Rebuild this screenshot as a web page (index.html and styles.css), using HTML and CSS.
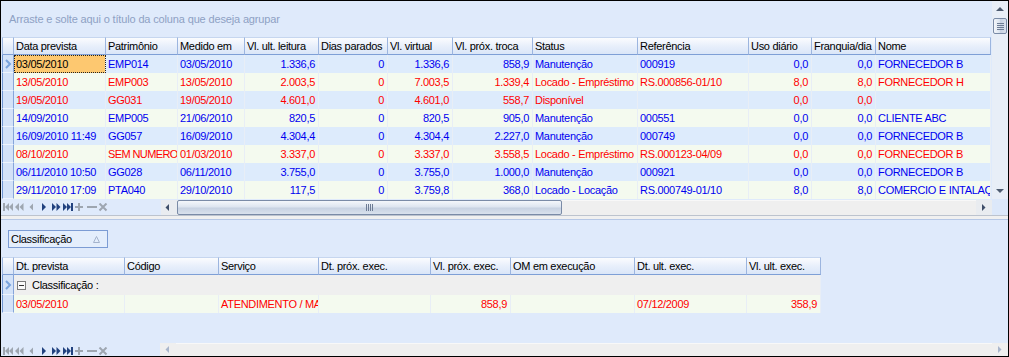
FILE: index.html
```html
<!DOCTYPE html>
<html lang="pt-BR">
<head>
  <meta charset="UTF-8">
  <title>Plano de manutenção</title>
  <link rel="stylesheet" href="styles.css">
</head>
<body>
<div class="window">

  <!-- grade principal -->
  <div class="top">
    <div class="top-main">
      <div class="group-panel">Arraste e solte aqui o título da coluna que deseja agrupar</div>
      <div class="grid-wrap">
        <table class="grid grid-top">
          <colgroup>
            <col class="c-ind"><col class="c-92"><col class="c-72"><col class="c-67"><col class="c-74"><col class="c-69"><col class="c-65"><col class="c-80"><col class="c-105"><col class="c-111"><col class="c-63"><col class="c-64"><col class="c-115">
          </colgroup>
          <thead>
            <tr>
              <th class="ind"></th>
              <th>Data prevista</th><th>Patrimônio</th><th>Medido em</th><th>Vl. ult. leitura</th><th>Dias parados</th><th>Vl. virtual</th><th>Vl. próx. troca</th><th>Status</th><th>Referência</th><th>Uso diário</th><th>Franquia/dia</th><th>Nome</th>
            </tr>
          </thead>
          <tbody>
            <tr class="odd blue">
              <td class="ind"><svg class="chev" width="8" height="10" viewBox="0 0 8 10"><polyline points="2,1 6,5 2,9" fill="none" stroke="#79a3dc" stroke-width="2"/></svg></td>
              <td class="focus">03/05/2010</td><td>EMP014</td><td>03/05/2010</td><td class="num">1.336,6</td><td class="num">0</td><td class="num">1.336,6</td><td class="num">858,9</td><td>Manutenção</td><td>000919</td><td class="num">0,0</td><td class="num">0,0</td><td>FORNECEDOR B</td>
            </tr>
            <tr class="even red">
              <td class="ind"></td>
              <td>13/05/2010</td><td>EMP003</td><td>13/05/2010</td><td class="num">2.003,5</td><td class="num">0</td><td class="num">7.003,5</td><td class="num">1.339,4</td><td>Locado - Empréstimo</td><td>RS.000856-01/10</td><td class="num">8,0</td><td class="num">8,0</td><td>FORNECEDOR H</td>
            </tr>
            <tr class="odd red">
              <td class="ind"></td>
              <td>19/05/2010</td><td>GG031</td><td>19/05/2010</td><td class="num">4.601,0</td><td class="num">0</td><td class="num">4.601,0</td><td class="num">558,7</td><td>Disponível</td><td></td><td class="num">0,0</td><td class="num">0,0</td><td></td>
            </tr>
            <tr class="even blue">
              <td class="ind"></td>
              <td>14/09/2010</td><td>EMP005</td><td>21/06/2010</td><td class="num">820,5</td><td class="num">0</td><td class="num">820,5</td><td class="num">905,0</td><td>Manutenção</td><td>000551</td><td class="num">0,0</td><td class="num">0,0</td><td>CLIENTE ABC</td>
            </tr>
            <tr class="odd blue">
              <td class="ind"></td>
              <td>16/09/2010 11:49</td><td>GG057</td><td>16/09/2010</td><td class="num">4.304,4</td><td class="num">0</td><td class="num">4.304,4</td><td class="num">2.227,0</td><td>Manutenção</td><td>000749</td><td class="num">0,0</td><td class="num">0,0</td><td>FORNECEDOR B</td>
            </tr>
            <tr class="even red">
              <td class="ind"></td>
              <td>08/10/2010</td><td class="tight">SEM NUMERO</td><td>01/03/2010</td><td class="num">3.337,0</td><td class="num">0</td><td class="num">3.337,0</td><td class="num">3.558,5</td><td>Locado - Empréstimo</td><td>RS.000123-04/09</td><td class="num">0,0</td><td class="num">0,0</td><td>FORNECEDOR B</td>
            </tr>
            <tr class="odd blue">
              <td class="ind"></td>
              <td>06/11/2010 10:50</td><td>GG028</td><td>06/11/2010</td><td class="num">3.755,0</td><td class="num">0</td><td class="num">3.755,0</td><td class="num">1.000,0</td><td>Manutenção</td><td>000921</td><td class="num">0,0</td><td class="num">0,0</td><td>FORNECEDOR B</td>
            </tr>
            <tr class="even blue">
              <td class="ind"></td>
              <td>29/11/2010 17:09</td><td>PTA040</td><td>29/10/2010</td><td class="num">117,5</td><td class="num">0</td><td class="num">3.759,8</td><td class="num">368,0</td><td>Locado - Locação</td><td>RS.000749-01/10</td><td class="num">8,0</td><td class="num">8,0</td><td>COMERCIO E INTALAÇÕES</td>
            </tr>
          </tbody>
        </table>
      </div>
      <div class="nav-bar">
        <svg class="nav" width="110" height="9" viewBox="1 0 110 9">
          <g fill="#9ea6b0">
            <rect x="3" y="0" width="2" height="8"/>
            <polygon points="9,0 9,8 5,4"/><polygon points="13,0 13,8 9,4"/>
            <polygon points="19,0 19,8 15,4"/><polygon points="23.5,0 23.5,8 19.5,4"/>
            <polygon points="33,0.5 33,7.5 29.5,4"/>
          </g>
          <g fill="#22427f">
            <polygon points="42,0 42,8 46,4"/>
            <polygon points="52,0 52,8 56,4"/><polygon points="56.5,0 56.5,8 60.5,4"/>
            <polygon points="63,0 63,8 67,4"/><polygon points="67,0 67,8 71,4"/>
            <rect x="71" y="0" width="2" height="8"/>
          </g>
          <g fill="#9ea6b0">
            <rect x="75" y="3" width="8" height="2"/><rect x="78" y="0" width="2" height="8"/>
            <rect x="87" y="3" width="10" height="2"/>
          </g>
          <path d="M99.5 0.5 L106.5 7.5 M106.5 0.5 L99.5 7.5" stroke="#9ea6b0" stroke-width="2"/>
        </svg>
        <div class="hscroll">
          <div class="sb-btn"><svg width="16" height="15" viewBox="0 0 16 15"><polygon points="8,4 8,11 4.5,7.5" fill="#3e4e69"/></svg></div>
          <div class="sb-thumb-h"><svg width="8" height="7" viewBox="0 0 8 7"><path d="M0.5 0 V7 M2.5 0 V7 M4.5 0 V7 M6.5 0 V7" stroke="#6d7c95" stroke-width="1"/></svg></div>
          <div class="sb-track"></div>
          <div class="sb-btn"><svg width="16" height="15" viewBox="0 0 16 15"><polygon points="6,4 6,11 9.5,7.5" fill="#3e4e69"/></svg></div>
        </div>
      </div>
    </div>

    <div class="side">
      <div class="vscroll">
        <div class="sb-btn-v"><svg width="16" height="16" viewBox="0 0 16 16"><polygon points="4,10 12,10 8,6" fill="#4d5b70"/></svg></div>
        <div class="sb-thumb-v"><svg width="7" height="7" viewBox="0 0 7 7"><path d="M0 0.5 H7 M0 2.5 H7 M0 4.5 H7 M0 6.5 H7" stroke="#6d7c95" stroke-width="1"/></svg></div>
        <div class="sb-track"></div>
        <div class="sb-btn-v"><svg width="16" height="16" viewBox="0 0 16 16"><polygon points="4,6 12,6 8,10" fill="#4d5b70"/></svg></div>
      </div>
      <div class="corner"></div>
    </div>
  </div>

  <div class="splitter"></div>

  <!-- grade de serviços -->
  <div class="bottom">
    <div class="group-box">
      <span>Classificação</span>
      <svg width="7" height="7" viewBox="0 0 7 7"><polygon points="0.5,6.5 6.5,6.5 3.5,0.5" fill="none" stroke="#a4b3cc" stroke-width="1"/></svg>
    </div>
    <table class="grid grid-bottom">
      <colgroup>
        <col class="c-ind"><col class="c-111"><col class="c-94"><col class="c-100"><col class="c-112"><col class="c-80"><col class="c-124"><col class="c-112"><col class="c-74">
      </colgroup>
      <thead>
        <tr>
          <th class="ind"></th>
          <th>Dt. prevista</th><th>Código</th><th>Serviço</th><th>Dt. próx. exec.</th><th>Vl. próx. exec.</th><th>OM em execução</th><th>Dt. ult. exec.</th><th>Vl. ult. exec.</th>
        </tr>
      </thead>
      <tbody>
        <tr class="group-row">
          <td class="ind"><svg class="chev" width="8" height="10" viewBox="0 0 8 10"><polyline points="2,1 6,5 2,9" fill="none" stroke="#79a3dc" stroke-width="2"/></svg></td>
          <td colspan="8"><span class="collapse"></span>Classificação :</td>
        </tr>
        <tr class="even red">
          <td class="ind"></td>
          <td>03/05/2010</td><td></td><td>ATENDIMENTO / MANUTENÇÃO</td><td></td><td class="num">858,9</td><td></td><td>07/12/2009</td><td class="num">358,9</td>
        </tr>
      </tbody>
    </table>
  </div>

  <div class="bottom-bar">
    <svg class="nav" width="110" height="9" viewBox="1 0 110 9">
      <g fill="#9ea6b0">
        <rect x="3" y="0" width="2" height="8"/>
        <polygon points="9,0 9,8 5,4"/><polygon points="13,0 13,8 9,4"/>
        <polygon points="19,0 19,8 15,4"/><polygon points="23.5,0 23.5,8 19.5,4"/>
        <polygon points="33,0.5 33,7.5 29.5,4"/>
      </g>
      <g fill="#22427f">
        <polygon points="42,0 42,8 46,4"/>
        <polygon points="52,0 52,8 56,4"/><polygon points="56.5,0 56.5,8 60.5,4"/>
        <polygon points="63,0 63,8 67,4"/><polygon points="67,0 67,8 71,4"/>
        <rect x="71" y="0" width="2" height="8"/>
      </g>
      <g fill="#9ea6b0">
        <rect x="75" y="3" width="8" height="2"/><rect x="78" y="0" width="2" height="8"/>
        <rect x="87" y="3" width="10" height="2"/>
      </g>
      <path d="M99.5 0.5 L106.5 7.5 M106.5 0.5 L99.5 7.5" stroke="#9ea6b0" stroke-width="2"/>
    </svg>
    <div class="hscroll hscroll-off">
      <div class="sb-btn"><svg width="16" height="13" viewBox="0 0 16 13"><polygon points="9,3 9,10 5.5,6.5" fill="#a9b6cc"/></svg></div>
      <div class="sb-track"></div>
      <div class="sb-btn"><svg width="16" height="13" viewBox="0 0 16 13"><polygon points="6,3 6,10 9.5,6.5" fill="#a9b6cc"/></svg></div>
    </div>
  </div>

</div>
</body>
</html>
```

FILE: styles.css
```css
* { box-sizing: border-box; }
body { margin: 0; font-family: "Liberation Sans", Arial, sans-serif; font-size: 11px; letter-spacing: -0.3px; color: #000; }

.window { width: 1009px; height: 357px; border: 1px solid #000; background: #dfeafb; display: flex; flex-direction: column; overflow: hidden; }

/* parte de cima */
.top { display: flex; height: 214px; }
.top-main { width: 991px; display: flex; flex-direction: column; }
.group-panel { height: 36px; padding: 12px 0 0 8px; color: #8ea1c4; white-space: nowrap; letter-spacing: -0.15px; }
.grid-wrap { height: 162px; padding-left: 1px; overflow: hidden; }

.grid { border-spacing: 0; table-layout: fixed; }
.grid-top { width: 989px; }
.grid-bottom { width: 819px; margin-left: 1px; }
.grid th, .grid td { white-space: nowrap; overflow: hidden; padding: 0 3px 0 2px; line-height: 13px; }
.grid th { height: 18px; text-align: left; font-weight: normal; background: linear-gradient(#fbfcfe, #e8effb 50%, #dae6f8); border-top: 1px solid #c6d6ef; border-bottom: 1px solid #7e9fd6; border-right: 1px solid #9cb5df; }
.grid td { height: 18px; border-right: 1px solid #e8eef6; }
.grid td.num { text-align: right; }
.grid td.tight { padding-right: 0; letter-spacing: -0.6px; }
.grid th.ind { border-left: 1px solid #9cb5df; }
.grid td.ind { padding: 0; background: #d3e2f8; border-left: 1px solid #7096d2; border-right: 1px solid #86a5da; border-bottom: 1px solid #eef4fd; }
.chev { display: block; margin-left: 1px; }

.odd td { background: #ddebfc; }
.even td { background: #f4faef; }
.blue td { color: #0000f0; }
.red td { color: #ff0000; }
.grid td.focus { background: #fdc870; color: #000; outline: 1px dotted #222; outline-offset: -1px; }

/* c-<largura> */
.c-ind { width: 12px; }
.c-63 { width: 63px; }
.c-64 { width: 64px; }
.c-65 { width: 65px; }
.c-67 { width: 67px; }
.c-69 { width: 69px; }
.c-72 { width: 72px; }
.c-74 { width: 74px; }
.c-80 { width: 80px; }
.c-92 { width: 92px; }
.c-94 { width: 94px; }
.c-100 { width: 100px; }
.c-105 { width: 105px; }
.c-111 { width: 111px; }
.c-112 { width: 112px; }
.c-115 { width: 115px; }
.c-124 { width: 124px; }

/* navegador + barras */
.nav-bar { height: 16px; display: flex; padding-top: 1px; }
.nav { display: block; margin-top: 3px; flex: none; }
.hscroll { display: flex; margin-left: 50px; flex: 1; height: 15px; background: #efefef; }
.sb-btn { width: 16px; flex: none; background: #e9ecf0; }
.sb-btn svg { display: block; }
.sb-track { flex: 1; background: #efefef; border-top: 1px solid #f8f8f8; }
.sb-thumb-h { width: 385px; flex: none; border: 1px solid #7a8ba7; border-radius: 2px; background: linear-gradient(#f4f7fb, #dde5f0 45%, #c7d2e2 55%, #d9e1ed); display: flex; align-items: center; justify-content: center; }
.sb-thumb-h svg { display: block; }

.side { width: 16px; display: flex; flex-direction: column; }
.vscroll { height: 198px; display: flex; flex-direction: column; background: #e8eef7; }
.vscroll .sb-track { background: #e8eef7; border: none; }
.sb-btn-v { height: 16px; flex: none; }
.sb-btn-v svg { display: block; }
.sb-thumb-v { height: 16px; margin: 1px 1px 0; flex: none; border: 1px solid #7a8ba7; border-radius: 2px; background: linear-gradient(90deg, #f4f7fb, #dde5f0 45%, #c7d2e2 55%, #d9e1ed); display: flex; align-items: center; justify-content: center; }
.sb-thumb-v svg { display: block; }
.corner { flex: 1; background: #dce8fa; }

.splitter { height: 5px; flex: none; background: #f0f0f0; border-top: 1px solid #bcc3ce; border-bottom: 1px solid #b5c7e6; }

/* parte de baixo */
.bottom { height: 123px; flex: none; padding-top: 10px; }
.group-box { width: 100px; height: 18px; margin-left: 7px; margin-bottom: 9px; border: 1px solid #7c9cd4; background: #e4eefc; display: flex; align-items: center; justify-content: space-between; padding: 0 7px 0 2px; }
.group-box svg { display: block; }
.group-row td { height: 20px; background: #efefef; }
.group-row td.ind { background: #d3e2f8; }
.collapse { display: inline-block; width: 9px; height: 9px; border: 1px solid #7c7c7c; background: #fafafa; vertical-align: -1px; margin: 0 6px 0 1px; position: relative; }
.collapse::after { content: ""; position: absolute; left: 1px; top: 3px; width: 5px; height: 1px; background: #333; }

.bottom-bar { height: 13px; flex: none; display: flex; }
.bottom-bar .nav { margin-top: 4px; }
.hscroll-off { height: 13px; margin-left: 49px; }
.hscroll-off .sb-btn { background: #efefef; }
```
